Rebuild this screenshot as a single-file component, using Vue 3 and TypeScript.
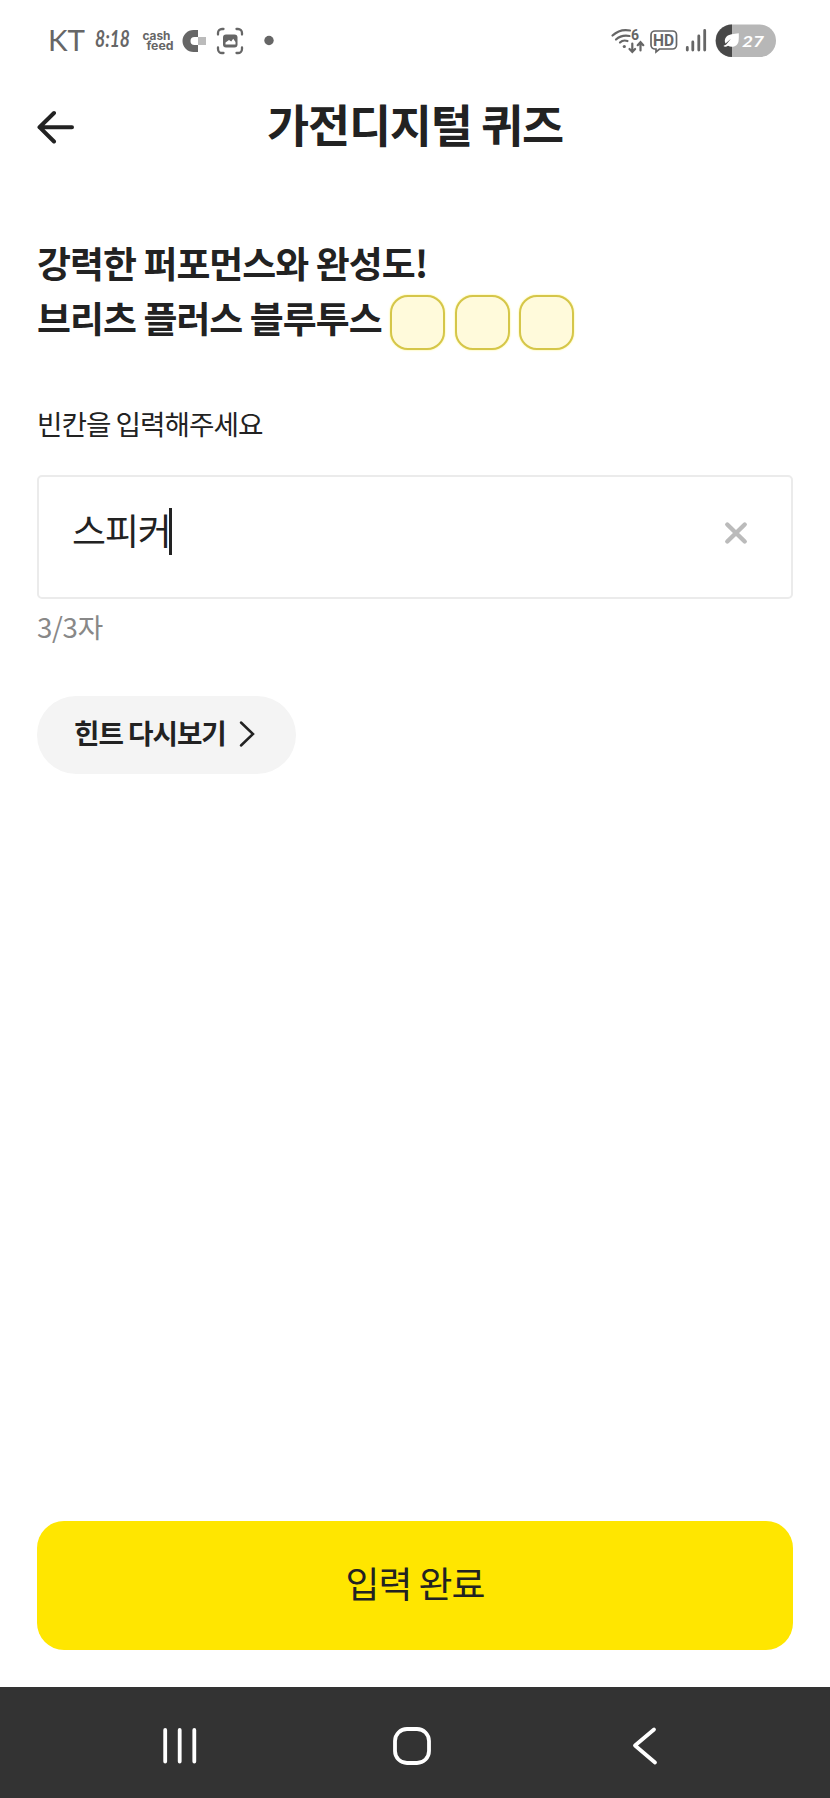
<script setup lang="ts">
import { ref, computed } from 'vue'

const maxLength = 3
const answer = ref('스피커')
const counter = computed(() => `${answer.value.length}/${maxLength}자`)
</script>

<template>
  <div class="screen">
    <div class="status">
      <svg width="150" height="80" viewBox="40 0 150 80" class="ink">
        <text x="48" y="51" class="carrier" textLength="37" lengthAdjust="spacingAndGlyphs">KT</text>
        <text x="95" y="47" class="clock" textLength="35" lengthAdjust="spacingAndGlyphs">8:18</text>
        <text x="142.500" y="40" class="brand" textLength="28" lengthAdjust="spacingAndGlyphs">cash</text>
        <text x="146.500" y="49.500" class="brand" textLength="27" lengthAdjust="spacingAndGlyphs">feed</text>
      </svg>
      <svg class="apps ink" width="96" height="80" viewBox="180 0 96 80">
        <path d="M198 30v7h-3.500a4 4 0 0 0 0 8h3.500v7h-4.500a11 11 0 0 1 0-22z" />
        <rect x="198" y="37" width="8" height="8" fill="#bbb" />
        <path d="M218 34.500v-1.500a4 4 0 0 1 4-4h1.500M236.500 29h1.500a4 4 0 0 1 4 4v1.500M242 47.500v1.500a4 4 0 0 1-4 4h-1.500M223.500 53h-1.500a4 4 0 0 1-4-4v-1.500" fill="none" stroke="#666" stroke-width="2.300" stroke-linecap="round" />
        <rect x="223" y="34.500" width="14.500" height="13" rx="3" />
        <path d="M225.500 44.500v-2l3.500-2.500 2.200 1.500 2-2.700 2.300 3.200v2.500z" fill="#fff" />
        <circle cx="269" cy="40.500" r="4.700" />
      </svg>
      <svg class="system ink" width="170" height="80" viewBox="610 0 170 80">
        <g fill="none" stroke="#666" stroke-width="2.200" stroke-linecap="round">
          <path d="M612.500 35.500Q620 28.500 630 30.500" />
          <path d="M616 39.500Q621.500 34.500 629.500 36" />
          <path d="M620 42.500Q623 39.500 627.500 41" />
          <path d="M632.300 43.500v8M629.500 49l2.800 3 2.800-3M640.500 50.500v-8M637.700 45.200l2.800-3 2.800 3" />
          <path d="M655 31h17.500a4 4 0 0 1 4 4v10a4 4 0 0 1-4 4h-13l-3.500 3v-3h-1a4 4 0 0 1-4-4v-10a4 4 0 0 1 4-4z" stroke-width="1.700" />
        </g>
        <circle cx="624.300" cy="46.500" r="1.600" />
        <text x="631" y="39.500" class="six">6</text>
        <text x="653" y="45.500" class="hd" textLength="21" lengthAdjust="spacingAndGlyphs">HD</text>
        <path d="M687.300 47.500v2.500M692.800 42v8M698.800 36v14M704.700 30.500v19.500" fill="none" stroke="#666" stroke-width="2.800" stroke-linecap="round" />
        <rect x="715.500" y="24.500" width="60.500" height="32.500" rx="16.250" fill="#b7b7b7" />
        <path d="M732 24.500a16.250 16.250 0 0 0 0 32.500z" fill="#484848" />
        <path d="M723.500 46c1 1.300 3 .8 4.500-.2 4 2.200 9.500.8 10.500-4.300.5-3 .3-5.500.3-8.200-5 1-10 .5-12.800 4-1.500 2-1.500 4.500-.5 6.300l5.500-4.800-4.800 5.700c-1 .9-2 .4-2.700 1.500z" fill="#fff" />
        <text x="742" y="46.500" class="level" textLength="22" lengthAdjust="spacingAndGlyphs">27</text>
      </svg>
    </div>

    <header class="header">
      <svg class="back" width="38" height="36" viewBox="0 0 38 36" fill="none" stroke="#222" stroke-width="4" stroke-linecap="round" stroke-linejoin="round">
        <path d="M17 4 2.500 18.200 17 32.500M2.500 18.200H35" />
      </svg>
      <h1>가전디지털 퀴즈</h1>
    </header>

    <main class="content">
      <h2>
        강력한 퍼포먼스와 완성도!
        <span class="line">브리츠 플러스 블루투스<span class="blanks"><i v-for="n in maxLength" :key="n"></i></span></span>
      </h2>
      <label class="label">빈칸을 입력해주세요</label>
      <div class="field">
        <span class="value">{{ answer }}</span><span class="caret"></span>
        <svg class="clear" width="24" height="24" viewBox="0 0 24 24" stroke="#bbb" stroke-width="4.400" stroke-linecap="round">
          <path d="M3.300 3.500 20.700 20.500M20.700 3.500 3.300 20.500" />
        </svg>
      </div>
      <p class="counter">{{ counter }}</p>
      <button class="hint">
        힌트 다시보기
        <svg width="16" height="28" viewBox="0 0 16 28" fill="none" stroke="#222" stroke-width="2.500" stroke-linecap="round">
          <path d="M2 2.500 14 14 2 25.500" />
        </svg>
      </button>
    </main>

    <button class="submit">입력 완료</button>

    <nav class="nav">
      <svg width="830" height="111" viewBox="0 1687 830 111" fill="none" stroke="#fff" stroke-width="3.800" stroke-linecap="round" stroke-linejoin="round">
        <path d="M165.200 1730v31.500M179.700 1730v31.500M194.300 1730v31.500" />
        <rect x="395" y="1729" width="34" height="34" rx="12" />
        <path d="M654 1729.500 635 1745.500 655 1762.500" />
      </svg>
    </nav>
  </div>
</template>

<style>
body {
  background: #fff;
}
</style>

<style scoped>
.screen {
  display: flex;
  flex-direction: column;
  width: 830px;
  height: 1798px;
  overflow: hidden;
  background: #fff;
  color: #222;
  font-family: "Noto Sans CJK KR", sans-serif;
  letter-spacing: -1.05px;
}
.status {
  display: flex;
  height: 80px;
  padding-left: 40px;
}
.apps {
  margin-left: -10px;
}
.ink {
  fill: #666;
  letter-spacing: 0;
}
.system {
  margin-left: 334px;
}
.carrier {
  font: 400 29.500px Lato, sans-serif;
}
.clock {
  font: italic 700 23px Lato, sans-serif;
}
.brand {
  font: 700 12px Inter, sans-serif;
}
.six {
  font: 700 14px Roboto, sans-serif;
}
.hd {
  font: 700 16px Roboto, sans-serif;
}
.level {
  font: italic 700 16px Lato, sans-serif;
  fill: #fff;
}
.header {
  display: grid;
  grid-template-columns: 80px 1fr 80px;
  align-items: center;
  height: 93px;
}
.back {
  margin-left: 36.500px;
}
h1 {
  margin: 0;
  padding-bottom: 8px;
  text-align: center;
  font-size: 45.800px;
  line-height: 60px;
  letter-spacing: -1.150px;
}
.content {
  display: flex;
  flex-direction: column;
  align-items: flex-start;
  padding: 62px 37px 0;
}
h2 {
  margin: 0;
  font-size: 36.900px;
  line-height: 55.300px;
  letter-spacing: -0.950px;
}
.line {
  display: flex;
}
.blanks {
  display: flex;
  gap: 9.500px;
  height: 52.300px;
  margin: 5px 0 -2px 8.500px;
}
.blanks i {
  box-sizing: border-box;
  width: 55px;
  height: 55px;
  border: 2px solid #d5c64a;
  border-radius: 18px;
  background: #fffadb;
  box-shadow: 0 0 2px #fff26a;
}
.label {
  margin-top: 57px;
  font-size: 27.700px;
  line-height: 40px;
  letter-spacing: -1px;
}
.field {
  box-sizing: border-box;
  display: flex;
  align-items: flex-start;
  width: 756px;
  height: 124px;
  margin-top: 32px;
  padding: 31px 43.500px 0 33px;
  border: 2px solid #ebebeb;
  border-radius: 5px;
}
.value {
  margin: -2px -1.500px 0 0;
  font-size: 36.900px;
  line-height: 47px;
}
.caret {
  width: 2.500px;
  height: 47px;
  background: #222;
}
.clear {
  margin: 13px 0 0 auto;
}
.counter {
  margin: 7px 0 0;
  color: #888;
  font-size: 27.700px;
  line-height: 40px;
  letter-spacing: -0.300px;
}
button {
  border: 0;
  color: #222;
  font-family: inherit;
  letter-spacing: inherit;
}
.hint {
  display: flex;
  align-items: center;
  width: 259px;
  height: 78px;
  margin-top: 50px;
  padding: 0 0 6px 37px;
  border-radius: 39px;
  background: #f4f4f4;
  font-size: 27.700px;
  font-weight: 700;
}
.hint svg {
  margin: 4px 0 0 13.500px;
}
.submit {
  height: 129px;
  margin: auto 37px 37px;
  padding: 0 0 7px;
  border-radius: 27px;
  background: #ffe600;
  font-size: 36.900px;
}
.nav {
  height: 111px;
  background: #333;
}
.nav svg {
  display: block;
}
</style>
